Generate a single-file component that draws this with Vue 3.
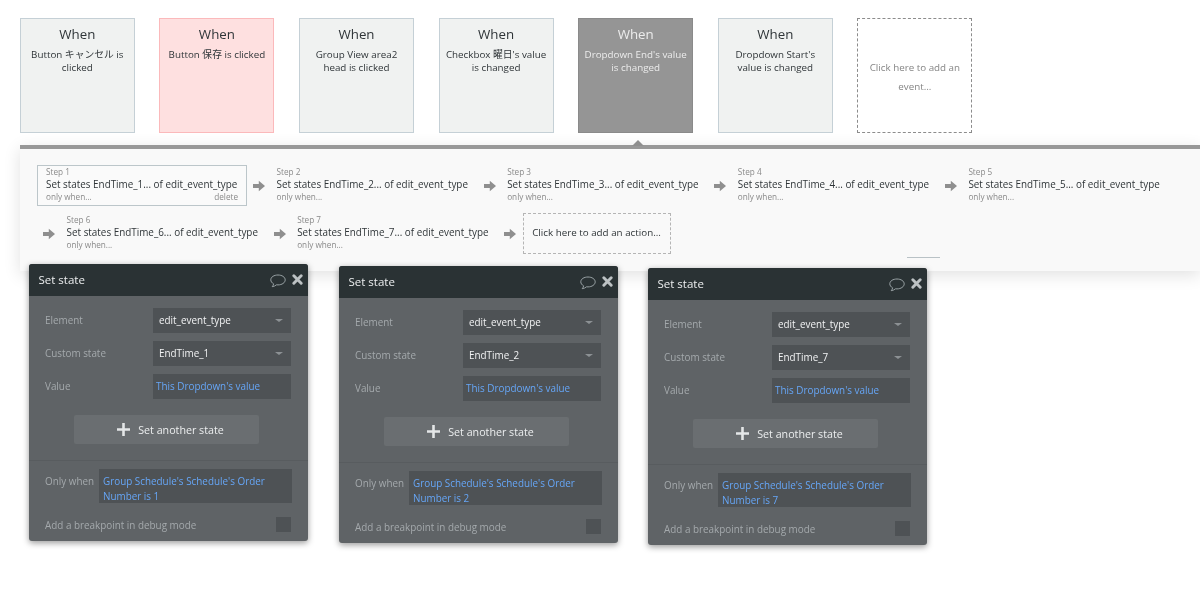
<script setup>
const events = [
  { text: 'Button キャンセル is clicked', kind: '' },
  { text: 'Button 保存 is clicked', kind: 'red' },
  { text: 'Group View area2 head is clicked', kind: '' },
  { text: 'Checkbox 曜日\'s value is changed', kind: '' },
  { text: 'Dropdown End\'s value is changed', kind: 'active' },
  { text: 'Dropdown Start\'s value is changed', kind: '' },
]
const steps = [1, 2, 3, 4, 5, 6, 7]
const panels = [
  { n: 1, left: 29, top: 264 },
  { n: 2, left: 339, top: 266 },
  { n: 7, left: 648, top: 268 },
]
</script>

<template>
  <div class="page">
    <div class="events">
      <div v-for="e in events" :key="e.text" class="event" :class="e.kind">
        <div class="when">When</div>
        <div class="desc">{{ e.text }}</div>
      </div>
      <div class="event add">Click here to add an event...</div>
    </div>

    <div class="flow">
      <div class="notch"></div>
      <div class="steps">
        <div v-for="s in steps" :key="s" class="item">
          <svg v-if="s !== 1" class="arrow" viewBox="0 0 12 12" width="12" height="12">
            <path d="M0 4h5.800V.8L12 6l-6.200 5.200V8H0z" fill="#8f8f8f" />
          </svg>
          <div class="step" :class="{ selected: s === 1 }">
            <div class="num">Step {{ s }}</div>
            <div class="title">Set states EndTime_{{ s }}... of edit_event_type</div>
            <div class="foot"><span>only when...</span><span v-if="s === 1">delete</span></div>
          </div>
        </div>
        <div class="item">
          <svg class="arrow" viewBox="0 0 12 12" width="12" height="12">
            <path d="M0 4h5.800V.8L12 6l-6.200 5.200V8H0z" fill="#8f8f8f" />
          </svg>
          <div class="add-action">Click here to add an action...</div>
        </div>
      </div>
      <div class="tick"></div>
    </div>

    <div
      v-for="p in panels"
      :key="p.n"
      class="panel"
      :style="{ left: p.left + 'px', top: p.top + 'px' }"
    >
      <div class="head">
        <span>Set state</span>
        <svg class="bubble" viewBox="0 0 16 14" width="16" height="14">
          <path d="M8 1C4 1 .8 3 .8 5.800c0 1.700 1.100 3.100 2.800 4-.1 1-.6 2-1.400 2.900 1.700-.2 3.200-.9 4.300-1.900.5.100 1 .1 1.500.1 4 0 7.200-2.200 7.200-5S12 1 8 1z" fill="none" stroke="#98a1a4" stroke-width="1" />
        </svg>
        <svg class="close" viewBox="0 0 12 12" width="11" height="11">
          <path d="M2 2l8 8M10 2l-8 8" stroke="#bcc1c3" stroke-width="3.200" stroke-linecap="round" />
        </svg>
      </div>
      <div class="body">
        <div class="fields">
          <div class="row">
            <label>Element</label>
            <div class="select">edit_event_type<i></i></div>
          </div>
          <div class="row">
            <label>Custom state</label>
            <div class="select">EndTime_{{ p.n }}<i></i></div>
          </div>
          <div class="row">
            <label>Value</label>
            <div class="value">This Dropdown's value</div>
          </div>
        </div>
        <div class="btn-wrap">
          <div class="btn">
            <svg viewBox="0 0 13 13" width="13" height="13">
              <path d="M6.500 0v13M0 6.500h13" stroke="#e4e6e7" stroke-width="2.600" />
            </svg>
            <span>Set another state</span>
          </div>
        </div>
        <div class="lower">
          <div class="when-row">
            <label>Only when</label>
            <div class="cond">Group Schedule's Schedule's Order Number is {{ p.n }}</div>
          </div>
          <div class="debug">
            <label>Add a breakpoint in debug mode</label>
            <div class="check"></div>
          </div>
        </div>
      </div>
    </div>
  </div>
</template>

<style scoped>
.page {
  position: relative;
  width: 1200px;
  height: 589px;
  overflow: hidden;
  background: #fff;
  font-family: "Open Sans", "Noto Sans CJK JP", sans-serif;
  color: #2f3538;
  filter: blur(0.25px);
}
.events {
  display: flex;
  gap: 24.600px;
  padding: 18px 0 0 19.800px;
}
.event {
  box-sizing: border-box;
  width: 115px;
  height: 115px;
  padding: 6px 4px 0;
  text-align: center;
  background: #f0f2f1;
  border: 1px solid #c5d0d6;
}
.event.red {
  background: #fee0e0;
  border-color: #fbb9bb;
}
.event.active {
  background: #959595;
  border-color: #8a8a8a;
  color: #ececec;
}
.event.add {
  display: flex;
  align-items: center;
  padding: 2px 8px 0;
  background: #fff;
  border: 1px dashed #8c8c8c;
  color: #858585;
  font-size: 9.800px;
  line-height: 19px;
}
.when {
  font-size: 13.300px;
  line-height: 18px;
}
.desc {
  margin-top: 5px;
  font-size: 9.800px;
  line-height: 13px;
}
.flow {
  position: relative;
  box-sizing: border-box;
  height: 126px;
  margin: 12px 0 0 20px;
  background: #f9f9f9;
  border-top: 4px solid #989898;
  box-shadow: 0 4px 16px rgba(0, 0, 0, 0.12);
}
.notch {
  position: absolute;
  left: 612px;
  top: -9px;
  border-left: 6px solid transparent;
  border-right: 6px solid transparent;
  border-bottom: 6px solid #8f8f8f;
}
.tick {
  position: absolute;
  left: 887px;
  top: 108px;
  width: 33px;
  height: 1px;
  background: #b9c2c6;
}
.steps {
  display: flex;
  flex-wrap: wrap;
  row-gap: 7px;
  padding: 16px 0 0 17px;
}
.item {
  display: flex;
  align-items: center;
}
.arrow {
  margin: 0 2.600px 0 6px;
}
.step {
  box-sizing: border-box;
  width: 210px;
  height: 41px;
  padding: 1px 8px 0 8px;
  border: 1px solid transparent;
}
.step.selected {
  background: #fafafa;
  border-color: #bcc6ca;
}
.num,
.foot {
  font-size: 8.200px;
  line-height: 10px;
  color: #8a8a8a;
}
.title {
  font-size: 9.900px;
  line-height: 15px;
  white-space: nowrap;
  color: #2f3538;
}
.foot {
  display: flex;
  justify-content: space-between;
}
.add-action {
  box-sizing: border-box;
  width: 148px;
  height: 41px;
  margin-left: 4.400px;
  padding-left: 8px;
  border: 1px dashed #b5b5b5;
  font-size: 9.800px;
  line-height: 37px;
  color: #2f3538;
}
.panel {
  position: absolute;
  width: 279px;
  height: 277px;
  border-radius: 3px;
  overflow: hidden;
  background: #5f6366;
  box-shadow: 0 2px 6px rgba(0, 0, 0, 0.4);
  color: #a4a9ac;
  font-size: 9.900px;
}
.head {
  display: flex;
  align-items: center;
  height: 32px;
  padding: 0 5px 2px 9.500px;
  box-sizing: border-box;
  background: #2a3234;
  color: #eceeef;
  font-size: 11.500px;
}
.head span {
  flex: 1;
}
.bubble {
  margin: 3px 6px 0 0;
}
.body {
  padding-top: 12px;
}
.fields {
  display: flex;
  flex-direction: column;
  gap: 8px;
}
.row {
  display: flex;
  align-items: center;
  height: 25px;
  padding: 0 17px 0 16px;
}
.row label {
  width: 108px;
  padding-bottom: 1px;
}
.select,
.value {
  position: relative;
  flex: 1;
  height: 25px;
  padding-left: 6px;
  background: #4e5255;
  line-height: 25px;
  color: #f2f3f4;
}
.value {
  padding-left: 3px;
  color: #66a6f7;
}
.select i {
  position: absolute;
  right: 8px;
  top: 11px;
  border-left: 4px solid transparent;
  border-right: 4px solid transparent;
  border-top: 3px solid #8c9194;
}
.btn-wrap {
  display: flex;
  justify-content: center;
  margin-top: 16px;
  padding-bottom: 16px;
  border-bottom: 1px solid #585c5f;
}
.btn {
  display: flex;
  align-items: center;
  justify-content: center;
  gap: 8px;
  box-sizing: border-box;
  width: 185px;
  height: 29px;
  margin-left: -4px;
  padding-left: 8px;
  background: #6a6e71;
  border-radius: 2px;
  color: #eceeef;
  font-size: 10.700px;
}
.lower {
  padding: 8px 17px 0 16px;
}
.when-row {
  display: flex;
  align-items: flex-start;
}
.when-row label {
  width: 54px;
  flex: none;
  line-height: 25px;
}
.cond {
  flex: 1;
  height: 34px;
  padding: 5px 4px 0;
  box-sizing: border-box;
  background: #4e5255;
  color: #66a6f7;
  line-height: 15px;
  margin-right: -1px;
}
.debug {
  display: flex;
  align-items: center;
  justify-content: space-between;
  height: 15px;
  margin-top: 14px;
}
.check {
  width: 15px;
  height: 15px;
  background: #4e5255;
}
</style>
